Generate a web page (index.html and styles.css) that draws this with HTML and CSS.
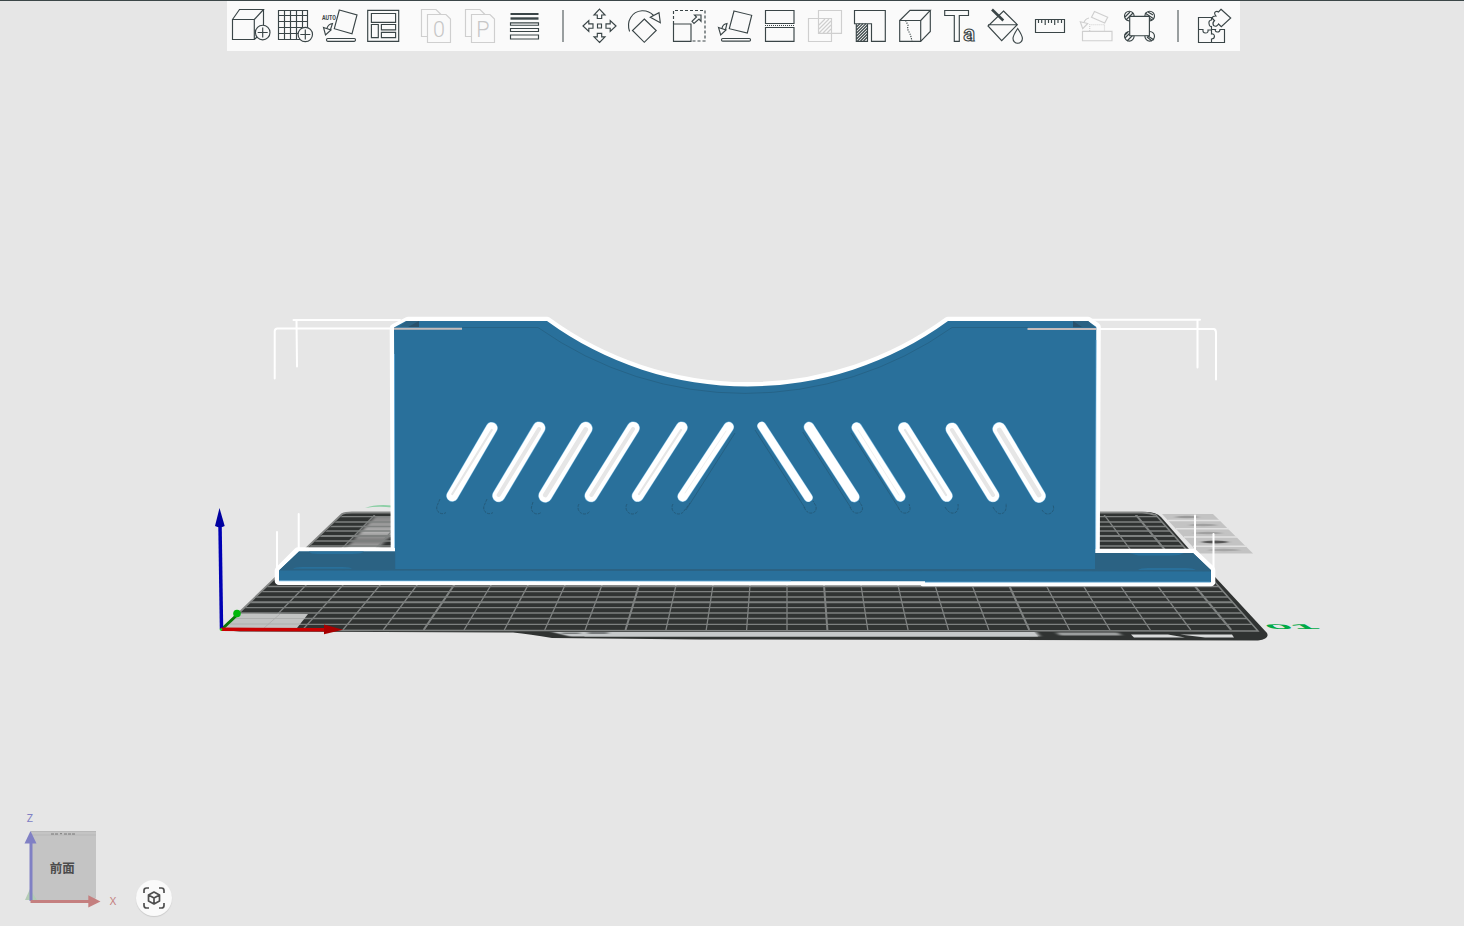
FILE: index.html
```html
<!DOCTYPE html>
<html lang="ja">
<head>
<meta charset="utf-8">
<title>Prepare</title>
<link rel="stylesheet" href="styles.css">
</head>
<body>
<main class="app">
<svg class="scene" viewBox="0 0 1464 926" width="1464" height="926">
  <defs>
    <clipPath id="bed"><path d="M222 630 L343 515 H1156 L1257 630Z"/></clipPath>
    <linearGradient id="sheen" x1="0" y1="0" x2="0" y2="1"><stop offset="0" stop-color="#858585"/><stop offset=".5" stop-color="#b0b0b0"/><stop offset=".75" stop-color="#777"/><stop offset="1" stop-color="#bbb"/></linearGradient>
    <filter id="soft"><feGaussianBlur stdDeviation="2 .7"/></filter>
  </defs>
  <!-- purge marks beside the plate -->
  <path d="M1162 514 H1213 L1253 553.500 H1199Z" fill="#c3c3c3"/>
  <g filter="url(#soft)"><ellipse cx="1187" cy="517" rx="12" ry="1.200" fill="#999"/><ellipse cx="1203" cy="525" rx="14" ry="1.200" fill="#a0a0a0"/><ellipse cx="1208" cy="533" rx="14" ry="1.200" fill="#a0a0a0"/><ellipse cx="1215" cy="542" rx="13" ry="1.500" fill="#555"/><ellipse cx="1224" cy="550" rx="16" ry="1.200" fill="#a5a5a5"/></g>
  <path d="M1168 520.500H1220M1176 528.700H1229M1184 537H1237M1193 546.300H1247" stroke="#e2e2e2" stroke-width="1.500"/>
  <!-- build plate -->
  <path d="M365 508 Q375 504 392 505.500 V507.500 Q378 506 365 508Z" fill="#8ccfa5"/>
  <path d="M221 630 L340 516 Q344 512 352 512 H1146 Q1156 512 1161 517 L1189 549 L1216 578 L1267 633 Q1270 639 1258 640.500 L700 639.500 L552 638 Q530 634 513 632.500 L240 631.500Z" fill="#303332"/>
  <path d="M221 630 L342 514 Q345 512.500 352 512.500 H1142 Q1150 513 1155 515" fill="none" stroke="#858786" stroke-width="1.800"/>
  <g filter="url(#soft)">
    <path d="M375 516 H396 V532 L377 549 H345Z" fill="url(#sheen)"/>
    <path d="M552 632 H1036 L1040 636.500 H570Z" fill="#c6c9ca"/>
    <path d="M1056 632.500 H1118 L1122 635.500 H1060Z" fill="#9b9e9e"/>
  </g>
  <path d="M575 632 H1034 L1038 636.500 H585Z" fill="#c6c9ca"/>
  <path filter="url(#soft)" d="M562 633.500 h18 M588 633 h20" stroke="#777a7b" stroke-width="2"/>
  <path d="M1131 634.500 H1168 L1185 637.500 H1134Z M1180 634.500 H1232 L1234 637.500 H1205Z" fill="#d9dbdb"/>
  <g clip-path="url(#bed)" stroke="#7e8180" stroke-width="1.300" fill="none">
    <path d="M787 514V630M850.300 514L867.800 630M882 514L908.100 630M913.600 514L948.500 630M945.300 514L988.900 630M1008.600 514L1069.700 630M1040.200 514L1110 630M1071.900 514L1150.400 630M1103.500 514L1190.800 630M755.400 514L746.600 630M723.700 514L706.200 630M692 514L665.900 630M628.800 514L585.100 630M597.100 514L544.700 630M565.500 514L504.300 630M533.800 514L464 630M470.500 514L383.200 630M438.900 514L342.800 630M407.200 514L302.400 630M375.600 514L262.100 630"/>
    <path stroke-width="2" d="M818.600 514L827.400 630M976.900 514L1029.300 630M1135.200 514L1231.200 630M660.400 514L625.500 630M502.200 514L423.600 630"/>
    <path d="M220 516.700H1260M220 522H1260M220 526.500H1260M220 531H1260M220 541H1260M220 546H1260M220 586.500H1260M220 591.700H1260M220 597H1260M220 607.700H1260M220 613H1260M220 618.500H1260M220 624.300H1260"/>
    <path stroke-width="1.900" d="M220 536H1260M220 602.300H1260"/>
  </g>
  <path d="M221 630.300 L1258 631 L1155 514" fill="none" stroke="#818483" stroke-width="1.500"/>
  <path d="M239 613.500 L308 614 L297 628 L224 628.500Z" fill="#c1c3c2"/>
  <path d="M236 618.500 H304 M230 624 H300 M280 614 L264 628" stroke="#a9abaa" stroke-width=".8"/>
  <text class="plate-no" transform="matrix(2 0 .5 .3 1270 629.300)" x="0" y="0">01</text>
  <!-- selection bounds behind the model -->
  <g fill="none" stroke="#fff" stroke-width="2" stroke-linecap="round">
    <path d="M293.500 320 H400 M296.500 320 L297 366.500 M394 328.500 H277 Q274.500 329 274.700 332 V378.500 M1092 319.700 H1200 M1197.500 320 V367.500 M1098 329 H1214 Q1216 329.500 1216 333 V379.500"/>
    <path d="M298.700 514 V549 M277 532 V576 M1195 515.500 V551 M1213.500 534 V576"/>
  </g>
  <!-- model -->
  <path d="M394 328 L408 321 H547 A340 340 0 0 0 948 321 H1088 L1096.500 327 L1095.500 553 H1193 L1211 570 V582 L923 582 V581.300 L279 580.700 V570.500 L298 551.500 H395Z" fill="#fff" stroke="#fff" stroke-width="8.600" stroke-linejoin="round"/>
  <path d="M394 327.500 L406 321 H547 A340 340 0 0 0 948 321 H1088 L1096.300 327 L1095.300 553 H1193 L1211 570.500 V582.300 H925 V581.300 L279 580.700 V570.500 L299 551.500 H395Z" fill="#29709b"/>
  <path d="M299 551.500 H395.200 V569 H1095 V553 H1193 L1211 570 V571.500 L279 570.500Z" fill="#2b6283"/>
  <path d="M309 551.500 H364 Q362 554 352 554 H318 Q310 554 309 551.500Z M293 568.800 Q295 567 302 567 H343 Q350 567 352 568.800Z M1129 553 H1184 Q1180 555.500 1172 555.500 H1138Z M1138 570 Q1140 568 1148 568 H1186 Q1193 568 1196 570Z" fill="#29709b"/>
  <path d="M279 580.900 H791 M925 582 H1210 M394.500 354 V548 M1096.100 340 L1095.600 549" stroke="#62aee0" stroke-width=".6" fill="none"/>
  <path d="M399 326.500 L407 321 H419 V327Z M1073 321 H1088 L1095 327.500 H1073Z" fill="#2b6283"/>
  <path d="M408 327 L419 321 V327Z M1073 321 V327 H1082Z" fill="#29516b"/>
  <path d="M462 327.500 H538 A358 358 0 0 0 952 327.500 H1028" fill="none" stroke="#235a7b" stroke-width=".6"/>
  <path d="M394 328.800 H462 M1027.500 329 H1096" stroke="#c4bcbc" stroke-width="2"/>
  <!-- vent shadows -->
  <g fill="none" stroke="#235672" stroke-width=".8">
    <path stroke-dasharray="3 1" d="M440 499 L437 506 A5.800 5.800 0 0 0 446 512.500 M487 499 L484 506 A5.800 5.800 0 0 0 493 512.500 M533 502 L531.500 507 A5.800 5.800 0 0 0 541 512.500 M579 504 A6 6 0 0 0 590 511 M627 504 A6 6 0 0 0 638 511 M673 504 A6 6 0 0 0 684 511 L690 503"/>
    <path stroke-dasharray="3 1" d="M804 507 Q807 514 812 513 Q817 512 816 506 L813 501 M850 507 Q853 514 858 513 Q864 512 862 506 L859 501 M898 507 Q901 514 906 513 Q912 512 909 504 M945 507 Q949 514 954 513 Q959 512 958 504 M993 507 Q997 515 1002 513.500 Q1007 512 1006 503 M1042 510 Q1046 516 1051 513 Q1055 510 1053 505"/>
    <path stroke-width=".6" d="M735 433 L686 510 M755 430 L805 508 M802.700 432 L851 508 M851 433 L898 507"/>
  </g>
  <!-- vents -->
  <g fill="none" stroke-linecap="round">
    <g stroke="#79b9df">
      <path stroke-width="12.200" d="M491.700 428L452.300 495.700M681.700 427.500L637.700 496M904 428L946.700 496"/>
      <path stroke-width="13.200" d="M539 428L498.700 495.700M633.300 428L591 495.700M952 429L993 495.700"/>
      <path stroke-width="14" d="M585.700 428.500L545.300 495.700M999.300 429L1039 496"/>
      <path stroke-width="10.800" d="M728.700 427L682.700 496.500M809 427L854.300 497M856.700 427.500L900.300 496.500"/>
      <path stroke-width="9.200" d="M761.700 426L808.300 497.500"/>
    </g>
    <g stroke="#fff">
      <path stroke-width="11.200" d="M491.700 428L452.300 495.700M681.700 427.500L637.700 496M904 428L946.700 496"/>
      <path stroke-width="12.200" d="M539 428L498.700 495.700M633.300 428L591 495.700M952 429L993 495.700"/>
      <path stroke-width="13" d="M585.700 428.500L545.300 495.700M999.300 429L1039 496"/>
      <path stroke-width="9.800" d="M728.700 427L682.700 496.500M809 427L854.300 497M856.700 427.500L900.300 496.500"/>
      <path stroke-width="8.200" d="M761.700 426L808.300 497.500"/>
    </g>
    <g stroke="#e6e6e6">
      <path stroke-width="2.200" d="M491.700 430L452.300 494M681 430L639 494M905 430L946 495"/>
      <path stroke-width="4" d="M539 429L498.700 495M633 429L591.500 495M952 430L993 495"/>
      <path stroke-width="4.800" d="M585.700 429.500L545.300 495M999.300 430L1039 495"/>
      <path stroke-width="1" d="M726 431L685 493M858 430L899 495" stroke="#f0f0f0"/>
    </g>
  </g>
  <!-- world axes -->
  <path d="M222 629 L237 615" stroke="#087a08" stroke-width="3"/><circle cx="237" cy="613.500" r="3.800" fill="#00b80a"/>
  <path d="M221.500 629 L220 525" stroke="#0000b4" stroke-width="3.500"/><path d="M219.500 508 L215 526 Q220 528.500 224.700 526Z" fill="#0000a0"/>
  <path d="M221 629.300 L325 629.700" stroke="#c90000" stroke-width="3.500"/><path d="M324 624.500 L343 629.800 L324 634.300Z" fill="#a80000"/>
  <circle cx="221" cy="629.500" r="1.300" fill="#1d1"/>
</svg>

<header class="toolbar">
  <div class="group">
    <svg class="tool" viewBox="228 1 44 49"><path d="M232.500 19.500H254.300V39.500H232.500ZM232.500 19.500L239.500 9.500H263.500L254.300 19.500M263.500 9.500V25M254.300 39.500L257 37"/><circle cx="262.700" cy="32.500" r="7.300" fill="#fafafa"/><path d="M257.700 32.500H267.700M262.700 27.500V37.500"/></svg>
    <svg class="tool" viewBox="272 1 44 49"><path d="M278.500 10.500H307.500V39.500H278.500ZM284.500 10.500V39.500M290.500 10.500V39.500M296.500 10.500V39.500M302.500 10.500V39.500M278.500 15.500H307.500M278.500 21.500H307.500M278.500 27.500H307.500M278.500 33.500H307.500"/><circle cx="305.300" cy="34.500" r="7.200" fill="#fafafa"/><path d="M300.300 34.500H310.300M305.300 29.500V39.500"/></svg>
    <svg class="tool" viewBox="316 1 44 49"><path d="M339.300 10L357 15L352 33.700L334.300 28.700ZM323.500 27.500L331 30L325.500 35ZM327 28Q328.500 24 332.500 23.500L330.500 29.500"/><rect x="326.500" y="38.500" width="29" height="2.800" rx="1.200"/><text class="auto" x="322" y="19.700" textLength="14" lengthAdjust="spacingAndGlyphs">AUTO</text></svg>
    <svg class="tool" viewBox="360 1 44 49"><path d="M367.700 10.400H398.700V41.300H367.700ZM371.400 13.500H395.600V22.300H371.400ZM371.400 24.500H378.300V37.600H371.400ZM381.400 24.500H395.600V29.800H381.400ZM381.400 32.400H395.600V37.600H381.400Z"/></svg>
  </div>
  <div class="group pages">
    <svg class="tool off" viewBox="414 1 44 49"><path d="M427.500 36.500H421.500V9.500H436L441 14.500M427.500 14.500H446L450.500 19V42.500H427.500Z"/><text class="letter" x="433" y="36.600">0</text></svg>
    <svg class="tool off" viewBox="458 1 44 49"><path d="M471.500 36.500H465.500V9.500H480L485 14.500M471.500 14.500H490L494.500 19V42.500H471.500Z"/><text class="letter" x="476.300" y="36.600">P</text></svg>
    <svg class="tool" viewBox="502 1 44 49"><path d="M510.500 14H538.500" stroke-width="2"/><path d="M510.500 18.500H538.500" stroke-width="2.400"/><path d="M510.500 22.800H538.500V25.200H510.500ZM510.500 28.500H538.500V31.500H510.500ZM510.500 35H538.500V39H510.500Z"/></svg>
  </div>
  <i class="sep"></i>
  <div class="group">
    <svg class="tool" viewBox="577 1 45 49"><path d="M597.500 24H601.500V28H597.500ZM599.500 9.200L605 15H601.700V18.500H597.300V15H594ZM599.500 42.500L605 36.800H601.700V33.300H597.300V36.800H594ZM583 26L588.800 20.500V23.800H593V28.200H588.800V31.500ZM616 26L610.200 20.500V23.800H606V28.200H610.200V31.500Z"/></svg>
    <svg class="tool" viewBox="622 1 45 49"><path d="M644.300 19L656.200 30.500L644.300 42.300L632.500 30.500ZM629.600 31.500C626 21 632 11.500 642 10.800Q649 10.500 653.500 15.500M650.300 17.300L659 12.700L660.300 22.700Z"/></svg>
    <svg class="tool" viewBox="667 1 45 49"><path stroke-dasharray="3 2" d="M673.500 24V10.500H705V41H691"/><path d="M673.500 24H691V41.300H673.500ZM694.500 15H701V21.300L699 19L694 23.500L692 21.300L696.500 17Z"/></svg>
    <svg class="tool" viewBox="712 1 45 49"><path d="M734 11L751.700 15.300L747.300 33L729.300 28.700ZM718.500 27.500L726 30L720.700 35ZM722 28Q723 24 727 23.500L725.500 29.500"/><rect x="721.500" y="38.500" width="29" height="2.600" rx="1.200"/></svg>
    <svg class="tool" viewBox="757 1 45 49"><path d="M765.500 10.500H794V23.500H765.500ZM765.500 27.500H794V41.300H765.500Z"/><path stroke-dasharray="1 1" d="M765 25.500H794.500"/></svg>
    <svg class="tool off" viewBox="802 1 45 49"><path d="M818.500 10.500H841.500V33.300H818.500ZM808.500 18.500H831.500V41.500H808.500ZM819 25L825 19M819 29L829 19M819 33L831 21M823 33L831 25M827 33L831 29"/></svg>
    <svg class="tool" viewBox="847 1 45 49"><path d="M854.500 10.500H885.300V41.300H871.500V23.700H854.500ZM856.300 23.700H867.500V41.300H856.300Z"/><path d="M856.500 27L860 23.700M856.500 30L863 23.700M856.500 33L866 23.700M856.500 36L867.500 25M856.500 39L867.500 28M857.500 41L867.500 31M860.500 41L867.500 34M863.500 41L867.500 37"/></svg>
    <svg class="tool" viewBox="892 1 45 49"><path d="M899.700 20.500H920.700V41.300H899.700ZM899.700 20.500L910 10.300H930.300L920.700 20.500M930.300 10.300V31.500L920.700 41.300"/><path stroke-dasharray="1.200 1.200" d="M905.500 20.500L908 25L907.500 29L910.500 35L912 41"/></svg>
    <svg class="tool" viewBox="937 1 45 49"><path d="M944.700 10.500H968.500V15.500H959.300V41.300H954.300V15.500H944.700Z"/><text class="small-a" x="963.300" y="40.700">a</text></svg>
    <svg class="tool" viewBox="982 1 45 49"><path d="M1003.500 11L1017.300 24.700L1001.700 40.700L988 26ZM988 24.700H1017.300"/><path stroke-width="2.600" d="M992 9.500L1003.300 20.500"/><path fill="#fafafa" d="M1017.700 28.500C1014 34 1013 36 1013 38.500A4.700 4.700 0 0 0 1022.400 38.500C1022.400 36 1021 33.500 1017.700 28.500Z"/></svg>
    <svg class="tool" viewBox="1027 1 45 49"><path d="M1035.500 19.500H1064.500V32.500H1035.500ZM1038.500 19.500V23M1041.700 19.500V23M1045.200 19.500V25M1048.500 19.500V23M1051.500 19.500V23M1054.700 19.500V25M1058 19.500V23M1061.500 19.500V23"/></svg>
    <svg class="tool off" viewBox="1072 1 45 49"><path d="M1082.500 31.300H1112V40.700H1082.500ZM1094.500 11.500L1107.700 17.300L1104.700 23L1091.500 17.300ZM1080.300 21.700L1087.700 23.500L1082.700 28.700ZM1084 22.500Q1085 19 1089 18"/><path stroke-dasharray="1 1" d="M1089.700 31V24.700H1104.500V31"/></svg>
    <svg class="tool" viewBox="1117 1 45 49"><g><circle cx="1129.300" cy="16" r="4.800"/><circle cx="1149.700" cy="16" r="4.800"/><circle cx="1129.300" cy="36.300" r="4.800"/><circle cx="1149.700" cy="36.300" r="4.800"/></g><path d="M1125 17L1130 12M1126 20L1133 13M1145 13L1154 19M1148 12L1153 15M1145 34L1154 40M1147 37L1152 41M1125 38L1130 33M1127 41L1133 35M1146 16L1152 20M1125 35L1128 32"/><path fill="#fafafa" d="M1129.700 16.400H1149.400V35.700H1129.700Z"/></svg>
  </div>
  <i class="sep sep-last"></i>
  <div class="group">
    <svg class="tool" viewBox="1192 1 45 49"><path d="M1198.500 29.500V17.500H1211.500V20Q1208.500 20.500 1209 23.500Q1209.500 27 1211.500 26.500V30H1208Q1208.500 33 1205.500 33Q1202.500 33 1203 29.500H1198.500V42.500H1211.500V39Q1214.500 39 1214.500 36Q1214 33.500 1211.500 34V30M1211.500 42.500H1224.500V29.500H1220Q1220 32 1217.500 32Q1214.500 31.500 1215.500 29.500H1211.500M1221 9.300L1230.700 18L1221.300 26.700L1218.500 24Q1216.500 27.500 1213.500 25.500Q1212 23 1214.500 20.500Q1211.500 18.500 1213 16.500Q1214 16 1216 16Q1213.500 13 1215.500 11.800Q1217 11 1218.500 12Z"/></svg>
  </div>
</header>

<aside class="viewer">
<svg class="gizmo" viewBox="20 808 110 108">
  <path d="M31 831H96V898L93 901H31Z" fill="#c4c4c4"/><path d="M31 831.500H96M31 835H96" stroke="#b8b8b8" stroke-width="1"/>
  <path d="M51 834H58M60 833.700H62M64 834H75" stroke="#666" stroke-width=".8" stroke-dasharray="3 1"/>
  <path d="M25 900L30 889L37 900Z" fill="#b3ccb5"/>
  <path d="M31 901V840" stroke="#8080c4" stroke-width="3"/><path d="M30.500 831L24.500 843.500H36.500Z" fill="#8080c4"/>
  <path d="M30.500 901.500H90" stroke="#c47f7f" stroke-width="3"/><path d="M88.300 895.300V907.500L100.500 901.400Z" fill="#c47f7f"/>
  <text class="face" x="62.300" y="873.300">前面</text>
  <text class="axis axis-z" x="30" y="822">Z</text>
  <text class="axis axis-x" x="113" y="905.300">X</text>
</svg>
<button class="fit" aria-label="Fit view"><svg viewBox="0 0 36 36"><path d="M8 13V10.500Q8 8 10.500 8H13M23 8H25.500Q28 8 28 10.500V13M28 23V25.500Q28 28 25.500 28H23M13 28H10.500Q8 28 8 25.500V23M18 12L23.500 15V21L18 24L12.500 21V15ZM12.500 15L18 18L23.500 15M18 18V24"/></svg></button>
</aside>
</main>
</body>
</html>
```

FILE: styles.css
```css
* { box-sizing: border-box; }
body { margin: 0; background: #e6e6e6; overflow: hidden; font-family: Roboto, "Noto Sans CJK JP", sans-serif; }
.app {
  width: 1464px; height: 926px;
  border-top: 1px solid #3b4648;
  display: flex; flex-direction: column; justify-content: space-between; align-items: flex-start;
  position: relative;
}
.scene { position: absolute; left: 0; top: -1px; }
.plate-no { font: 700 23px "Liberation Sans", sans-serif; fill: #00aa46; }

.toolbar {
  position: relative;
  display: flex; align-items: center;
  width: 1013px; height: 50px;
  margin-left: 227px; padding: 0 1px 1px;
  background: #fafafa;
}
.group { display: flex; }
.pages { margin-left: 10px; }
.tool {
  height: 49px; overflow: visible; display: block;
  fill: none; stroke: #3a4547; stroke-width: 1.15;
}
.off { stroke: #cfcfcf; }
.sep { width: 1.5px; height: 32px; background: #999e9f; margin: 0 13.5px 0 16px; }
.sep-last { margin: 0 13.5px 0 15px; }
.auto { font: 700 6.5px Roboto, sans-serif; fill: #3a4547; stroke: none; }
.letter { font: 300 21.5px Roboto, sans-serif; fill: #c6c6c6; stroke: none; }
.small-a { font: 700 22px Roboto, sans-serif; fill: none; stroke-width: 1.1; }

.viewer { position: relative; display: flex; align-items: flex-end; padding: 0 0 10px 20px; gap: 5.5px; }
.gizmo { width: 110px; height: 108px; }
.fit {
  width: 36px; height: 36px; padding: 0; border: 0; border-radius: 50%;
  background: #fafafa; box-shadow: 0 1px 1px rgba(0, 0, 0, .12);
}
.fit svg { display: block; width: 36px; height: 36px; fill: none; stroke: #4f4f4f; stroke-width: 1.7; stroke-linejoin: round; }
.face { font: 700 12.5px "Noto Sans CJK JP", sans-serif; fill: #4c4c4c; text-anchor: middle; }
.axis { font: 400 11px "Noto Sans", sans-serif; text-anchor: middle; }
.axis-z { fill: #8080c4; }
.axis-x { fill: #c47f7f; }
```
